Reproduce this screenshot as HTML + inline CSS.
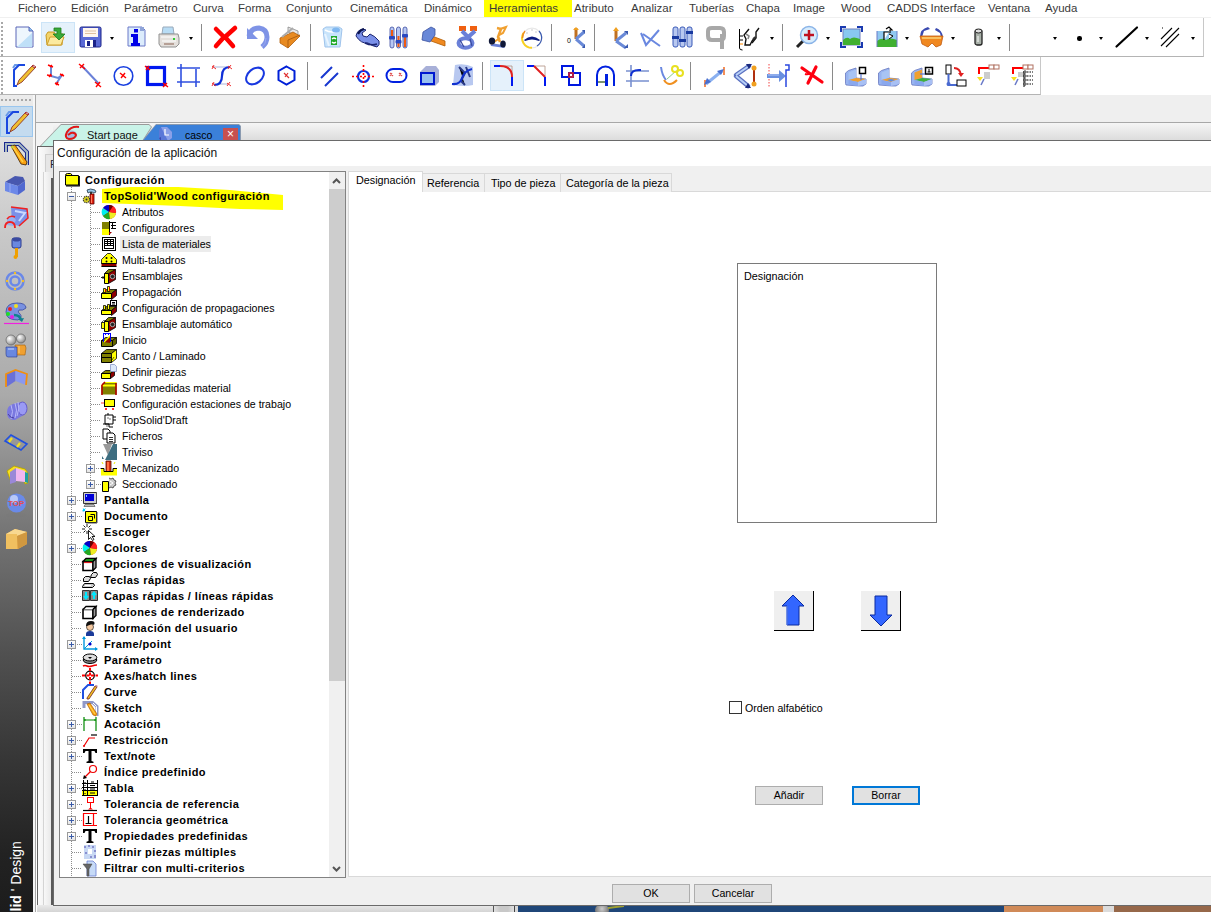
<!DOCTYPE html>
<html><head><meta charset="utf-8">
<style>
*{margin:0;padding:0;box-sizing:border-box}
html,body{width:1211px;height:912px;overflow:hidden;background:#fff;font-family:"Liberation Sans",sans-serif}
body{position:relative}
.a{position:absolute}
.mi{position:absolute;top:1px;font-size:11.5px;line-height:14px;color:#3a3a3a;white-space:nowrap}
.sep{position:absolute;width:1px;background:#a0a0a0}
.dd{position:absolute;width:0;height:0;border-left:3px solid transparent;border-right:3px solid transparent;border-top:3px solid #000}
svg{position:absolute;overflow:visible}
.tr{position:absolute;font-size:11px;line-height:16px;white-space:nowrap;color:#000}
.b{font-weight:bold;letter-spacing:0.4px}
.n{font-size:10.6px}
.tab{position:absolute;font-size:10.8px;line-height:14px;color:#000;white-space:nowrap}
.btn{position:absolute;background:#e1e1e1;border:1px solid #adadad;font-size:10.6px;text-align:center;color:#000}
.dv{width:1px;background:repeating-linear-gradient(#8c8c8c 0 1px,transparent 1px 2px)}
.dh{height:1px;background:repeating-linear-gradient(90deg,#8c8c8c 0 1px,transparent 1px 2px)}
.ex{width:9px;height:9px;border:1px solid #9a9a9a;background:linear-gradient(#fff,#e4e4e4)}
.ex i{position:absolute;left:1px;top:3px;width:5px;height:1px;background:#3a5ba8}
.ex b{position:absolute;left:3px;top:1px;width:1px;height:5px;background:#3a5ba8}
</style></head><body>

<!-- MENU BAR -->
<div class="a" style="left:0;top:0;width:1211px;height:17px;background:#fff"></div>
<div class="a" style="left:484px;top:0;width:88px;height:17px;background:#ffff00"></div>
<div class="a" style="left:489px;top:17px;width:72px;height:1px;background:#ffff00"></div>
<div class="a" style="left:0;top:17px;width:1211px;height:1px;background:#f0f0f0"></div>
<span class="mi" style="left:18px">Fichero</span>
<span class="mi" style="left:71px">Edición</span>
<span class="mi" style="left:124px">Parámetro</span>
<span class="mi" style="left:193px">Curva</span>
<span class="mi" style="left:238px">Forma</span>
<span class="mi" style="left:286px">Conjunto</span>
<span class="mi" style="left:350px">Cinemática</span>
<span class="mi" style="left:424px">Dinámico</span>
<span class="mi" style="left:489px">Herramientas</span>
<span class="mi" style="left:574px">Atributo</span>
<span class="mi" style="left:631px">Analizar</span>
<span class="mi" style="left:689px">Tuberías</span>
<span class="mi" style="left:746px">Chapa</span>
<span class="mi" style="left:793px">Image</span>
<span class="mi" style="left:841px">Wood</span>
<span class="mi" style="left:887px">CADDS Interface</span>
<span class="mi" style="left:988px">Ventana</span>
<span class="mi" style="left:1045px">Ayuda</span>

<!-- TOOLBAR ROWS -->
<div class="a" style="left:0;top:18px;width:1204px;height:39px;background:#fff;border-right:1px solid #c8c8c8;border-bottom:1px solid #b4b4b4"></div>
<div class="a" style="left:0;top:57px;width:1041px;height:38px;background:#fff;border-right:1px solid #c8c8c8;border-bottom:1px solid #b4b4b4"></div>
<div class="a" style="left:1px;top:22px;width:2px;height:34px;background:repeating-linear-gradient(#a8a8a8 0 2px,transparent 2px 4px)"></div>
<div class="a" style="left:1px;top:60px;width:2px;height:34px;background:repeating-linear-gradient(#a8a8a8 0 2px,transparent 2px 4px)"></div>

<div class="a" style="left:41px;top:22px;width:34px;height:31px;background:#e5f1fb;border:1px solid #cce4f7"></div>
<svg style="left:15px;top:26px" width="19" height="22" viewBox="0 0 19 22"><path d="M1 1h13l4 4v16H1z" fill="#eef6fd" stroke="#5a66b8"/><path d="M2 21L17 7v14z" fill="#bfe0f8"/><path d="M14 1v4h4" fill="#8cc4f0" stroke="#5a66b8"/></svg>
<svg style="left:45px;top:26px" width="22" height="21" viewBox="0 0 22 21"><path d="M1 9l2-3h6l1 2h8l-1 11H2z" fill="#f3d36a" stroke="#c89a20"/><path d="M2 19l3-8h14l-3 8z" fill="#fbeaa0" stroke="#d0a030"/><path d="M9 2h7v6h4l-6 6-6-6h4V5H9z" fill="#3aaa3a" stroke="#1e7e1e" stroke-width=".8"/></svg>
<svg style="left:79px;top:26px" width="23" height="22" viewBox="0 0 23 22"><rect x="1" y="1" width="21" height="20" rx="1.5" fill="#5a6ad6" stroke="#1a2288"/><rect x="4" y="2" width="15" height="9" fill="#fff6ee"/><path d="M6 5h11M6 7.5h11" stroke="#e0c0a0"/><rect x="6" y="14" width="11" height="7" fill="#fff"/><rect x="8" y="15" width="3" height="5" fill="#1a2288"/><rect x="14" y="14" width="3" height="7" fill="#1a2288"/></svg>
<div class="dd" style="left:110px;top:37px;border-width:3px 2.5px 0"></div>
<svg style="left:127px;top:26px" width="19" height="21" viewBox="0 0 19 21"><path d="M1 1h14l3 3v16H1z" fill="#dcecfc" stroke="#6a78c8"/><path d="M13 1h4v4h-4z" fill="#8fa4d8"/><rect x="7" y="3" width="4" height="3.5" fill="#0000e8"/><path d="M4 8h7v9h2v3H4v-3h2v-6H4z" fill="#0000e8"/></svg>
<svg style="left:158px;top:26px" width="22" height="22" viewBox="0 0 22 22"><path d="M5 1h10l1 7H4z" fill="#b8dcf4" stroke="#9ab"/><path d="M1 8h19l1 4v6l-3 3H3l-2-3z" fill="#e4e0dc" stroke="#909090"/><path d="M3 11h15M4 15h14" stroke="#fff"/><rect x="15" y="12" width="2" height="2" fill="#3c3"/><path d="M6 18h10" stroke="#886050"/></svg>
<div class="dd" style="left:189px;top:37px;border-width:3px 2.5px 0"></div>
<div class="sep" style="left:201px;top:24px;height:27px;background:#8a8a8a"></div>
<svg style="left:213px;top:26px" width="24" height="22" viewBox="0 0 24 22"><path d="M3 3l8 8-8 9M22 2l-10 9 8 9" stroke="#ff0000" stroke-width="4.5" fill="none" stroke-linecap="round"/></svg>
<svg style="left:246px;top:26px" width="24" height="23" viewBox="0 0 24 23"><path d="M3 10q2-8 10-8 8 1 8 9 0 6-5 10" stroke="#7e93e6" stroke-width="5" fill="none"/><path d="M1 2v11h11z" fill="#7e93e6"/><path d="M16 21q4-3 4-9" stroke="#9aa8f0" stroke-width="1" fill="none"/></svg>
<svg style="left:279px;top:26px" width="22" height="23" viewBox="0 0 22 23"><path d="M9 1l10 4v5l-10-4z" fill="#e8e8e8" stroke="#888" stroke-width=".8"/><path d="M1 12l13-6 7 4-12 12-8-5z" fill="#e88a20" stroke="#b06010" stroke-width=".8"/><path d="M9 22V14l12-5" stroke="#b06010" fill="none"/><path d="M3 11l11-9" stroke="#aaa" stroke-width="2"/></svg>
<div class="sep" style="left:310px;top:24px;height:27px;background:#8a8a8a"></div>
<svg style="left:322px;top:26px" width="21" height="22" viewBox="0 0 21 22"><path d="M1 3l3-2h13l3 2-2 18H3z" fill="#c8e4fb" stroke="#a0c4ec"/><path d="M3 4q7 4 15 0" stroke="#fff" stroke-width="1.5" fill="none"/><ellipse cx="14" cy="4" rx="4" ry="2.5" fill="#80b8f0"/><path d="M3 8l4 12" stroke="#e8f4ff" stroke-width="2"/><path d="M9 10h6v9H9z" fill="#20a828"/><path d="M10 13q2-2 4 0M10 16q2 2 4 0" stroke="#fff" stroke-width="1.2" fill="none"/></svg>
<svg style="left:355px;top:26px" width="24" height="22" viewBox="0 0 24 22"><path d="M1 10q1-6 7-7l3 1-4 3 1 3 4 1 3-3q5 2 9 7 1 4-2 6-5-1-9-4-7 1-12-7z" fill="#7a90e8" stroke="#1a2470" stroke-width="1"/><path d="M3 8q2-4 6-5" stroke="#0a1450" stroke-width="2.2" fill="none"/><path d="M10 17q6 3 12 1" stroke="#1a2470" stroke-width="1.5" fill="none"/></svg>
<svg style="left:389px;top:26px" width="20" height="23" viewBox="0 0 20 23"><rect x="1" y="1" width="4" height="21" rx="2" fill="#b8c8f4" stroke="#3a4aa0" stroke-width=".8"/><rect x="7.5" y="1" width="4" height="21" rx="2" fill="#b8c8f4" stroke="#3a4aa0" stroke-width=".8"/><rect x="14" y="1" width="4" height="21" rx="2" fill="#b8c8f4" stroke="#3a4aa0" stroke-width=".8"/><path d="M3 4v7M9.5 10v11M16 8v13" stroke="#f05a10" stroke-width="2"/><rect x="0" y="10" width="6" height="3.5" rx="1" fill="#2a48c0"/><rect x="6.5" y="14" width="6" height="3.5" rx="1" fill="#2a48c0"/><rect x="13" y="8" width="6" height="3.5" rx="1" fill="#2a48c0"/></svg>
<svg style="left:421px;top:26px" width="25" height="22" viewBox="0 0 25 22"><path d="M11 10l13 5v5l-14-5z" fill="#f08a20" stroke="#b05a00" stroke-width=".8"/><path d="M2 6l8-5 4 2v6l-5 7-8-2z" fill="#6888d8" stroke="#3a50a0" stroke-width=".8"/></svg>
<svg style="left:455px;top:26px" width="22" height="24" viewBox="0 0 22 24"><path d="M4 0h7v5H4zM15 0h7v5h-7z" fill="#f06010"/><path d="M7 5l8 8M20 5l-9 8" stroke="#6a80d8" stroke-width="4"/><ellipse cx="10.5" cy="17" rx="7" ry="4.8" fill="none" stroke="#6a80d8" stroke-width="4"/><path d="M5 14l4 7M15 13l2 7" stroke="#3a4aa0" stroke-width="1.2"/><path d="M9 16l2-1 2 2-2 2z" fill="#fff"/></svg>
<svg style="left:488px;top:26px" width="20" height="22" viewBox="0 0 20 22"><path d="M9 2l4 1-3 8 2 5" stroke="#f0a030" stroke-width="2.5" fill="none"/><path d="M12 3l6-2-3 6-4 2" stroke="#f0a030" stroke-width="2" fill="none"/><path d="M2 17l13 2 2 3-14-2z" fill="#6a80d8"/><path d="M3 18l9-6" stroke="#f0a030" stroke-width="2"/><ellipse cx="4" cy="15" rx="3.2" ry="3.5" fill="#101838"/><ellipse cx="15" cy="18" rx="2.8" ry="3.5" fill="#101838"/></svg>
<svg style="left:521px;top:26px" width="22" height="23" viewBox="0 0 22 23"><circle cx="11" cy="12" r="9.8" fill="#fff" stroke="#e8e8e8" stroke-width="1.2"/><path d="M2.5 7A9.8 9.8 0 0 0 11 21.8" stroke="#f8d020" stroke-width="2" fill="none"/><path d="M4 5A9.8 9.8 0 0 0 1.5 12" stroke="#f09020" stroke-width="1.5" fill="none"/><path d="M18 5A9.8 9.8 0 0 1 16 20" stroke="#3a5ab0" stroke-width="1.2" fill="none"/><path d="M3 14q8-7 16 0l-1 1q-7-3-14 0z" fill="#0a1a80"/><path d="M5 7h2M10 4h2M14 6h2" stroke="#ccc"/></svg>
<div class="sep" style="left:551px;top:24px;height:27px;background:#8a8a8a"></div>
<svg style="left:566px;top:26px" width="20" height="22" viewBox="0 0 20 22"><path d="M10 2v11" stroke="#c07020" stroke-width="3"/><path d="M7 4l3-3 3 3z" fill="#f0a020"/><path d="M10 13l8-7M10 13l8 7" stroke="#6a8ad8" stroke-width="3"/><path d="M16 4h3v4zM16 22h3v-4z" fill="#3a5ab0"/><text x="1" y="17" font-size="7" font-family="Liberation Sans" fill="#000">0</text></svg>
<div class="sep" style="left:594px;top:24px;height:27px;background:#8a8a8a"></div>
<svg style="left:611px;top:26px" width="18" height="23" viewBox="0 0 18 23"><path d="M5 4v11" stroke="#c07020" stroke-width="3"/><path d="M2 5l3-4 3 4z" fill="#f0a020"/><path d="M5 15l10-8M5 15l10 7" stroke="#6a8ad8" stroke-width="3"/><path d="M13 5h4v4zM13 22h4v-4z" fill="#3a5ab0"/></svg>
<svg style="left:640px;top:26px" width="21" height="21" viewBox="0 0 21 21"><path d="M1 7l5 12 13-15M3 8l17 12" stroke="#6a88e0" stroke-width="2" fill="none"/></svg>
<svg style="left:672px;top:26px" width="22" height="22" viewBox="0 0 22 22"><rect x="1" y="1" width="5" height="20" rx="2" fill="#b8c8f0" stroke="#3a5ab8"/><rect x="8" y="1" width="5" height="20" rx="2" fill="#b8c8f0" stroke="#3a5ab8"/><rect x="15" y="1" width="5" height="20" rx="2" fill="#b8c8f0" stroke="#3a5ab8"/><rect x="0" y="10" width="7" height="3" fill="#1a3aa0"/><rect x="7" y="13" width="7" height="3" fill="#1a3aa0"/><rect x="14" y="5" width="7" height="3" fill="#1a3aa0"/></svg>
<svg style="left:705px;top:26px" width="22" height="24" viewBox="0 0 22 24"><path d="M3 5q0-3 4-3h8q4 0 4 4v4q0 4-4 4H7q-4 0-4-4z" fill="none" stroke="#a8a8a8" stroke-width="4"/><path d="M15 8h4v15h-4z" fill="#a8a8a8"/></svg>
<svg style="left:738px;top:26px" width="23" height="22" viewBox="0 0 23 22"><path d="M1.5 3v19q0 2 3 2" stroke="#000" stroke-width="1" fill="none"/><path d="M2 10h3M2 14h3" stroke="#000"/><path d="M2 18h3" stroke="#f80"/><path d="M11 3L6 9l2 4-1 6h5l2-4 3-4" stroke="#111" stroke-width="1.4" fill="none"/><path d="M8 8l3 2-1 3" stroke="#888" stroke-width="1.6" fill="none"/><path d="M21 2l-3 4v6l-4 5" stroke="#111" stroke-width="1.4" fill="none"/><path d="M15 13l3-2" stroke="#333" stroke-width="2"/></svg>
<div class="dd" style="left:770px;top:37px;border-width:3px 2.5px 0"></div>
<div class="sep" style="left:782px;top:24px;height:27px;background:#8a8a8a"></div>
<svg style="left:795px;top:25px" width="24" height="24" viewBox="0 0 24 24"><path d="M2 22l7-7" stroke="#222" stroke-width="3"/><circle cx="14" cy="10" r="8.5" fill="#d8ecfc" stroke="#8ab4e8" stroke-width="1.5"/><path d="M14 5v10M9 10h10" stroke="#c01020" stroke-width="2.5"/></svg>
<div class="dd" style="left:826px;top:37px;border-width:3px 2.5px 0"></div>
<svg style="left:840px;top:26px" width="23" height="22" viewBox="0 0 23 22"><rect x="3" y="3" width="17" height="16" fill="#88c8f0" stroke="#7080c0"/><path d="M3 14q4-4 7-1 3-3 10 0v6H3z" fill="#40b030"/><path d="M1 6V1h5M17 1h5v5M1 16v5h5M17 21h5v-5" stroke="#1a3ab0" stroke-width="2" fill="none"/></svg>
<svg style="left:876px;top:26px" width="22" height="22" viewBox="0 0 22 22"><rect x="1" y="5" width="20" height="16" fill="#90c8f0"/><path d="M1 15q5-4 9-1 4-3 11 0v7H1z" fill="#40b030"/><path d="M1 5v16M21 5v16" stroke="#6a7ac8"/><path d="M8 14V6h5M10 3l3-2 3 3h-2v3" stroke="#000" stroke-width="1.2" fill="#fff"/><path d="M13 8l4 2-4 3" stroke="#000" fill="#fff"/></svg>
<div class="dd" style="left:905px;top:37px;border-width:3px 2.5px 0"></div>
<svg style="left:919px;top:26px" width="25" height="22" viewBox="0 0 25 22"><path d="M1 11q0-8 8-10l2 2-6 2-2 6zM24 11q-1-7-7-9l-1 2 5 3 1 4z" fill="#3a4ab0"/><path d="M1 10h23l-2 9-5 2-4-4-4 4-6-3z" fill="#f08820" stroke="#c05a10" stroke-width=".8"/><path d="M3 12h19" stroke="#f8c060" stroke-width="2"/></svg>
<div class="dd" style="left:951px;top:37px;border-width:3px 2.5px 0"></div>
<svg style="left:974px;top:28px" width="9" height="18" viewBox="0 0 9 18"><rect x="1" y="2" width="7" height="15" rx="2" fill="#a8b0a8" stroke="#222" stroke-width="1.3"/><ellipse cx="4.5" cy="3" rx="3.5" ry="2" fill="#ddd" stroke="#222"/><path d="M4 8v6" stroke="#fff"/></svg>
<div class="dd" style="left:997px;top:37px;border-width:3px 2.5px 0"></div>
<div class="sep" style="left:1009px;top:24px;height:27px;background:#8a8a8a"></div>
<div class="dd" style="left:1053px;top:37px;border-width:3px 2.5px 0"></div>
<div class="a" style="left:1077px;top:36px;width:4.5px;height:4.5px;border-radius:50%;background:#000"></div>
<div class="dd" style="left:1099px;top:37px;border-width:3px 2.5px 0"></div>
<svg style="left:1115px;top:26px" width="24" height="22" viewBox="0 0 24 22"><path d="M1.5 20.5L22 1.5" stroke="#000" stroke-width="2.2" stroke-linecap="round"/></svg>
<div class="dd" style="left:1145px;top:37px;border-width:3px 2.5px 0"></div>
<svg style="left:1160px;top:26px" width="22" height="22" viewBox="0 0 22 22"><path d="M1 13L12 2M1 20L19 2M6 21L19 8" stroke="#000" stroke-width="1.1"/><path d="M2 2h1" stroke="#000"/></svg>
<div class="dd" style="left:1191px;top:37px;border-width:3px 2.5px 0"></div>
<div class="a" style="left:490px;top:60px;width:34px;height:31px;background:#e5f1fb;border:1px solid #cce4f7"></div>
<svg style="left:12px;top:64px" width="25" height="23" viewBox="0 0 25 23"><path d="M7 1H3L1 4" stroke="#6a9ae8" stroke-width="2" fill="none"/><path d="M13 1H7L2 6v16h3" stroke="#1a48e0" stroke-width="2" fill="none"/><path d="M5 21l2-5L20 2l3 2-13 14z" fill="#f0c030" stroke="#802020" stroke-width=".8"/><path d="M20 2l1-1 3 2-1 1z" fill="#fff" stroke="#a33"/></svg>
<svg style="left:47px;top:64px" width="18" height="23" viewBox="0 0 18 23"><path d="M4 2v10l7 2 4-3-6 9" stroke="#6a8ad8" stroke-width="2" fill="none"/><path d="M1 1l5 2M3 3l2-2M0 11l5 1M2 13l2-3M13 10l4 2M14 12l2-2M8 19l4 2M9 21l2-3" stroke="#f00" stroke-width="1.4"/></svg>
<svg style="left:78px;top:63px" width="24" height="25" viewBox="0 0 24 25"><path d="M4 3l17 18" stroke="#6a80d8" stroke-width="2"/><path d="M1 1l6 5M6 1L2 5M17 19l6 5M22 19l-4 5" stroke="#f00" stroke-width="1.4"/></svg>
<svg style="left:113px;top:65px" width="21" height="22" viewBox="0 0 21 22"><circle cx="10.5" cy="11" r="9.3" fill="none" stroke="#1a40e0" stroke-width="1.6"/><path d="M7 8l6 5M12 8l-4 5" stroke="#f00" stroke-width="1.4"/></svg>
<svg style="left:145px;top:65px" width="23" height="22" viewBox="0 0 23 22"><rect x="2.5" y="2.5" width="17" height="17" fill="none" stroke="#0018f0" stroke-width="3.2"/><path d="M0 1l5 4M4 1L1 5M18 18l5 4M22 18l-4 4" stroke="#f00" stroke-width="1.4"/></svg>
<svg style="left:177px;top:64px" width="23" height="23" viewBox="0 0 23 23"><path d="M4 0v23M19 5v18M0 4h23M0 18h23" stroke="#3050e0" stroke-width="1.6"/></svg>
<svg style="left:211px;top:65px" width="22" height="22" viewBox="0 0 22 22"><path d="M2 2h16M3 19h14" stroke="#7080c0" stroke-width=".6"/><path d="M3 20q8 0 8-9t8-9" stroke="#1030d8" stroke-width="2.2" fill="none"/><path d="M1 1l4 3M3 0L1 4M17 1l4 3M20 0l-3 4M1 18l4 3M3 17l-2 4M16 18l4 3M19 17l-3 4" stroke="#f03030" stroke-width="1"/></svg>
<svg style="left:244px;top:65px" width="22" height="22" viewBox="0 0 22 22"><ellipse cx="11" cy="11" rx="10" ry="7" transform="rotate(-40 11 11)" fill="none" stroke="#1838e0" stroke-width="2"/></svg>
<svg style="left:277px;top:65px" width="19" height="21" viewBox="0 0 19 21"><path d="M9.5 1.5l8 4.5v9l-8 4.5-8-4.5v-9z" fill="none" stroke="#0020d8" stroke-width="2"/><path d="M7 8l5 5M11 8l-3 4" stroke="#e03030" stroke-width="1.2"/></svg>
<div class="sep" style="left:307px;top:62px;height:28px;background:#8a8a8a"></div>
<svg style="left:320px;top:66px" width="19" height="21" viewBox="0 0 19 21"><path d="M1 12L12 1M5 20L18 7" stroke="#1838d0" stroke-width="2"/></svg>
<svg style="left:352px;top:65px" width="23" height="23" viewBox="0 0 23 23"><circle cx="11.5" cy="11.5" r="5.5" fill="none" stroke="#1030e0" stroke-width="2.2"/><path d="M11.5 0v23M0 11.5h23" stroke="#f00" stroke-width="1.6" stroke-dasharray="2 2"/></svg>
<svg style="left:385px;top:67px" width="23" height="17" viewBox="0 0 23 17"><rect x="1.5" y="2" width="20" height="13" rx="6.5" fill="#fff" stroke="#0020e0" stroke-width="2"/><path d="M5 6l3 3M7 6l-2 3M14 6l3 3M16 6l-2 3" stroke="#e05050" stroke-width="1.2"/></svg>
<svg style="left:419px;top:64px" width="21" height="23" viewBox="0 0 21 23"><path d="M1 8l6-6h10l3 4v12l-4 4H1z" fill="#a8b0d8"/><path d="M2 9h13v11H2z" fill="#98c0f0" stroke="#0018d0" stroke-width="2"/></svg>
<svg style="left:451px;top:64px" width="23" height="23" viewBox="0 0 23 23"><path d="M4 1q10-2 18 2v18q-8 2-20 0z" fill="#b8c8f0"/><path d="M8 3l6 6-4 8 4 4M15 3l4 10" stroke="#283888" stroke-width="2"/><path d="M1 20q8 1 10-6t10-9" stroke="#1030d0" stroke-width="2" fill="none"/></svg>
<div class="sep" style="left:482px;top:62px;height:28px;background:#8a8a8a"></div>
<svg style="left:494px;top:65px" width="21" height="21" viewBox="0 0 21 21"><path d="M18 1v11" stroke="#b09080" stroke-width=".8"/><path d="M7 1h11" stroke="#b09080" stroke-width=".8"/><path d="M0 1h6" stroke="#0018f0" stroke-width="2"/><path d="M6 1q12 0 12 11" stroke="#e02020" stroke-width="2" fill="none"/><path d="M18 12v9" stroke="#0018f0" stroke-width="2"/></svg>
<svg style="left:527px;top:65px" width="21" height="21" viewBox="0 0 21 21"><path d="M7 1h11v11" stroke="#b09080" stroke-width=".8" fill="none"/><path d="M0 1h7" stroke="#0018f0" stroke-width="2"/><path d="M7 1l11 11" stroke="#e02020" stroke-width="2"/><path d="M18 12v9" stroke="#0018f0" stroke-width="2"/></svg>
<svg style="left:561px;top:65px" width="20" height="21" viewBox="0 0 20 21"><rect x="1" y="1" width="11" height="11" fill="none" stroke="#0018e0" stroke-width="2"/><rect x="8" y="8" width="11" height="12" fill="none" stroke="#0018e0" stroke-width="2"/><rect x="8" y="8" width="4" height="4" fill="none" stroke="#e02020" stroke-width="1.5"/></svg>
<svg style="left:595px;top:65px" width="21" height="21" viewBox="0 0 21 21"><path d="M2 21V10a8.5 8.5 0 0 1 17 0v11" stroke="#0020e0" stroke-width="2" fill="none"/><path d="M10 9h3v12h-3z" fill="#0020e0"/><path d="M3 17h7" stroke="#507040" stroke-width="1.5"/></svg>
<svg style="left:626px;top:64px" width="23" height="23" viewBox="0 0 23 23"><path d="M5 1v22M0 7h23M0 17h23" stroke="#7890d0" stroke-width="1.6"/><path d="M5 12q0-6 8-6h2" stroke="#1030d0" stroke-width="2" fill="none"/></svg>
<svg style="left:659px;top:65px" width="25" height="22" viewBox="0 0 25 22"><path d="M2 2q1 8 5 13" stroke="#6a88e0" stroke-width="2" fill="none"/><path d="M5 15q5 8 13 0" stroke="#f09020" stroke-width="2" fill="none"/><path d="M8 14l9-8" stroke="#8c8" stroke-width="1"/><circle cx="16" cy="4" r="3" fill="none" stroke="#e8e020" stroke-width="2"/><circle cx="21" cy="8" r="3" fill="none" stroke="#e8e020" stroke-width="2"/></svg>
<div class="sep" style="left:690px;top:62px;height:28px;background:#8a8a8a"></div>
<svg style="left:702px;top:66px" width="25" height="21" viewBox="0 0 25 21"><path d="M3 14v7M22 1v8" stroke="#f06010" stroke-width="1.4"/><path d="M4 18L20 5" stroke="#8ab0f0" stroke-width="3"/><path d="M2 19l3-7 4 4zM22 3l-7 2 4 4z" fill="#4a70d0"/></svg>
<svg style="left:734px;top:64px" width="23" height="25" viewBox="0 0 23 25"><path d="M2 11L15 2M2 12l12 10" stroke="#5a70c0" stroke-width="4.5" stroke-linecap="round"/><path d="M2 11L15 2M2 12l12 10" stroke="#b8d0f8" stroke-width="2"/><path d="M12 0h6l-3 5zM11 24h6l-3-5z" fill="#1a2a80"/><path d="M20 4v16" stroke="#b03010" stroke-width="2"/><circle cx="20" cy="4" r="2.5" fill="#f0a020"/><circle cx="20" cy="20" r="2.5" fill="#f0a020"/></svg>
<svg style="left:767px;top:64px" width="23" height="23" viewBox="0 0 23 23"><path d="M2 0v23" stroke="#f04040" stroke-width="1" stroke-dasharray="1.5 1.5"/><path d="M0 10h12v-4l7 6-7 6v-4H0z" fill="#6a90e0"/><path d="M1 11h11" stroke="#b0c8f8"/><path d="M18 1h4v5h-3v17" stroke="#2a48e0" stroke-width="1.5" fill="none"/></svg>
<svg style="left:800px;top:65px" width="24" height="22" viewBox="0 0 24 22"><path d="M2 3l20 14M16 2L8 18" stroke="#ff0010" stroke-width="3.2" stroke-linecap="round"/><path d="M5 9q3 1 5-1" stroke="#ff0010" stroke-width="2" fill="none"/></svg>
<div class="sep" style="left:832px;top:62px;height:28px;background:#8a8a8a"></div>
<svg style="left:845px;top:65px" width="22" height="22" viewBox="0 0 22 22"><path d="M0.5 8l3-2.5 7.5-2.5v10l10 1v5l-3 2h-4l-13-1-0.5-1.5z" fill="#98b4f0" stroke="#6878c0" stroke-width=".8"/><path d="M3.5 7.5l7.5-3v8.5l-7.5 2z" fill="#a8c4f4"/><path d="M3.5 15l7.5-2 10 1-8 3z" fill="#f0a030"/><path d="M3.5 15l9.5 2v4l-9.5-1.5z" fill="#8aa8ee"/><path d="M13 17l8-3v5l-8 2z" fill="#a8c0f4"/><rect x="14.5" y="2.5" width="6" height="6" fill="#fff" stroke="#000" stroke-width="1.5"/><path d="M16 9v6" stroke="#5a78d0" stroke-width="1.2"/></svg>
<svg style="left:878px;top:65px" width="22" height="22" viewBox="0 0 22 22"><path d="M0.5 8l3-2.5 7.5-2.5v10l10 1v5l-3 2h-4l-13-1-0.5-1.5z" fill="#98b4f0" stroke="#6878c0" stroke-width=".8"/><path d="M3.5 7.5l7.5-3v8.5l-7.5 2z" fill="#a8c4f4"/><path d="M3.5 15l7.5-2 10 1-8 3z" fill="#f0a030"/><path d="M3.5 15l9.5 2v4l-9.5-1.5z" fill="#8aa8ee"/><path d="M13 17l8-3v5l-8 2z" fill="#a8c0f4"/><path d="M9 15l4-1 4 1-4 1.5z" fill="#5a8ae0"/></svg>
<svg style="left:911px;top:65px" width="22" height="22" viewBox="0 0 22 22"><path d="M0.5 8l3-2.5 7.5-2.5v10l10 1v5l-3 2h-4l-13-1-0.5-1.5z" fill="#98b4f0" stroke="#6878c0" stroke-width=".8"/><path d="M3.5 7.5l7.5-3v8.5l-7.5 2z" fill="#f0a030"/><path d="M3.5 15l7.5-2 10 1-8 3z" fill="#40b040"/><path d="M3.5 15l9.5 2v4l-9.5-1.5z" fill="#8aa8ee"/><path d="M13 17l8-3v5l-8 2z" fill="#a8c0f4"/><rect x="14.5" y="2.5" width="7" height="6.5" fill="#fff" stroke="#000" stroke-width="1.5"/><path d="M18 4v3M16.5 7h3" stroke="#000"/><path d="M9 9h5" stroke="#5a78d0" stroke-width="1.2"/></svg>
<svg style="left:945px;top:64px" width="22" height="24" viewBox="0 0 22 24"><rect x="1" y="1" width="5" height="9" fill="#fff" stroke="#000"/><path d="M3.5 10v11h9" stroke="#4a6ad0" stroke-width="2" fill="none"/><circle cx="3.5" cy="20" r="2" fill="#4a6ad0"/><rect x="12" y="16" width="9" height="6" fill="#fff" stroke="#000"/><path d="M9 4q6 0 7 7" stroke="#e02020" stroke-width="2" fill="none"/><path d="M13 9l3 4 3-4z" fill="#e02020"/></svg>
<svg style="left:976px;top:64px" width="23" height="24" viewBox="0 0 23 24"><path d="M3 10V4h19" stroke="#f00" stroke-width="2" fill="none"/><rect x="13" y="1" width="5" height="4" fill="#fff" stroke="#b07060"/><rect x="18" y="1" width="5" height="4" fill="#fff" stroke="#b07060"/><path d="M1 13h6l-3 4z" fill="#f8e020"/><path d="M8 8h6v7H8z" fill="#ccc"/><path d="M8 15l-3 6" stroke="#6a7ac8" stroke-width="1.5"/></svg>
<svg style="left:1010px;top:64px" width="23" height="24" viewBox="0 0 23 24"><path d="M3 10V4h19" stroke="#f00" stroke-width="2" fill="none"/><rect x="13" y="1" width="5" height="4" fill="#fff" stroke="#b07060"/><rect x="18" y="1" width="5" height="4" fill="#fff" stroke="#b07060"/><path d="M1 13h6l-3 4z" fill="#f8e020"/><path d="M8 8h6v5H8z" fill="#ccc"/><path d="M8 15l-3 6" stroke="#6a7ac8" stroke-width="1.5"/><path d="M14 7v16" stroke="#000"/><circle cx="15" cy="8" r="1.2" fill="#fff" stroke="#000" stroke-width=".8"/><circle cx="15" cy="12" r="1.2" fill="#fff" stroke="#000" stroke-width=".8"/><circle cx="15" cy="16" r="1.2" fill="#fff" stroke="#000" stroke-width=".8"/><circle cx="15" cy="20" r="1.2" fill="#fff" stroke="#000" stroke-width=".8"/><path d="M17 8h6M17 12h6M17 16h6M17 20h6" stroke="#000" stroke-dasharray="1.5 1"/></svg>
<!-- GRAY AREA + TAB STRIP -->
<div class="a" style="left:36px;top:95px;width:1175px;height:27px;background:#efefef"></div>
<div class="a" style="left:36px;top:122px;width:1175px;height:1px;background:#a8a8a8"></div>
<div class="a" style="left:36px;top:123px;width:1175px;height:17px;background:linear-gradient(#f6f6f6,#dcdcdc)"></div>

<!-- LEFT TOOLBAR -->
<div class="a" style="left:0;top:95px;width:36px;height:817px;background:linear-gradient(#ececec 0px,#dcdcdc 60px,#c8c8c8 140px,#aaaaaa 300px,#8a8a8a 380px,#727272 445px,#505050 560px,#363636 665px,#222 760px,#1c1c1c 817px)"></div>
<div class="a" style="left:33px;top:95px;width:2px;height:817px;background:#f6f6f6"></div>
<div class="a" style="left:35px;top:95px;width:1px;height:817px;background:#a8a8a8"></div>
<div class="a" style="left:1px;top:99px;width:32px;height:2px;background:repeating-linear-gradient(90deg,#a8a8a8 0 2px,transparent 2px 4px)"></div>
<div class="a" style="left:0;top:106px;width:33px;height:31px;background:#c4dbef;border:1px solid #9ac6ee"></div>
<svg style="left:5px;top:111px" width="25" height="23" viewBox="0 0 25 23"><path d="M8 1H4L1 5" stroke="#6a9ae8" stroke-width="2" fill="none"/><path d="M14 1H8L2 7v15h3" stroke="#1a48e0" stroke-width="2" fill="none"/><path d="M5 21l2-5L20 2l3 2-13 14z" fill="#f0c030" stroke="#802020" stroke-width=".8"/><path d="M20 2l1-1 3 2-1 1z" fill="#fff" stroke="#a33"/></svg>
<svg style="left:4px;top:142px" width="25" height="24" viewBox="0 0 25 24"><path d="M2 10V2h13l8 8v13" stroke="#1a2a90" stroke-width="4" fill="none"/><path d="M2 10V2h13l8 8v13" stroke="#a8b8c0" stroke-width="2" fill="none"/><path d="M7 4l4-1 12 17-1 3-5-1z" fill="#f8a010" stroke="#402000" stroke-width=".8"/><path d="M9 5l10 15" stroke="#ffd040" stroke-width="1.5"/><circle cx="8.5" cy="5" r="1.5" fill="#c8d040"/></svg>
<svg style="left:4px;top:174px" width="22" height="22" viewBox="0 0 22 22"><path d="M1 8l10-6 8 1 2 4-7 5z" fill="#4858b0"/><path d="M1 8l13 4v9L1 17z" fill="#6c88e8"/><path d="M14 12l7-5v9l-7 5z" fill="#5068d0"/><path d="M6 10v8" stroke="#8aa0f0" stroke-width="1.5"/></svg>
<svg style="left:4px;top:205px" width="25" height="24" viewBox="0 0 25 24"><path d="M7 2l16 2 1 9-9 8-7-2z" fill="#7a90e8"/><path d="M7 2l16 2 1 9-9 8" stroke="#f02020" stroke-width="1.5" fill="none"/><path d="M11 6l10 2-6 8" stroke="#c8d8ff" stroke-width="2" fill="none"/><path d="M3 14l6-3 3 4-3 6-6-1z" fill="#98b0f0"/><path d="M3 14q3-4 8-2" stroke="#f02020" stroke-width="1.5" fill="none"/><path d="M1 23q0-6 5-6t5 6" stroke="#f02020" stroke-width="1.8" fill="none"/></svg>
<svg style="left:11px;top:237px" width="11" height="23" viewBox="0 0 11 23"><rect x="1" y="1" width="9" height="10" rx="2" fill="#6a88e0" stroke="#2a3a90"/><ellipse cx="5.5" cy="2.5" rx="4" ry="2" fill="#3a4aa0"/><path d="M5.5 11v9" stroke="#f0a000" stroke-width="3"/><circle cx="4.5" cy="20" r="2" fill="#f0a000"/></svg>
<svg style="left:5px;top:271px" width="20" height="20" viewBox="0 0 20 20"><circle cx="10" cy="10" r="8.5" fill="none" stroke="#6a88e8" stroke-width="2.5"/><circle cx="10" cy="10" r="4.5" fill="none" stroke="#6a88e8" stroke-width="2.5"/><circle cx="10" cy="2" r="1.2" fill="#f8c020"/><circle cx="10" cy="18" r="1.2" fill="#f8c020"/><circle cx="2" cy="10" r="1.2" fill="#f8c020"/><circle cx="18" cy="10" r="1.2" fill="#f8c020"/></svg>
<svg style="left:4px;top:302px" width="25" height="22" viewBox="0 0 25 22"><path d="M2 10q0-9 11-9 9 0 9 5-3 3-7 2-2 2 1 4 3 3-2 6-12 0-12-8z" fill="#7890e0" stroke="#3a4aa0" stroke-width=".8"/><circle cx="6" cy="7" r="2" fill="#f02020"/><circle cx="12" cy="4" r="2" fill="#f0e020"/><circle cx="4" cy="12" r="2" fill="#20e020"/><circle cx="8" cy="15" r="2" fill="#e020e0"/><path d="M10 13q6 0 7 5" stroke="#108090" stroke-width="2.5" fill="none"/><path d="M14 17l4 3 2-4z" fill="#108090"/><path d="M0 21.5h25" stroke="#f020e0" stroke-width="1.2"/></svg>
<svg style="left:5px;top:333px" width="23" height="25" viewBox="0 0 23 25"><defs><radialGradient id="hg" cx=".35" cy=".35" r=".7"><stop offset="0" stop-color="#fff"/><stop offset="1" stop-color="#8a8a8a"/></radialGradient></defs><circle cx="16" cy="5.5" r="4.5" fill="url(#hg)" stroke="#555" stroke-width=".6"/><path d="M10 12h10l1 3-1 7h-9z" fill="#f0a030" stroke="#a06010" stroke-width=".6"/><path d="M14 13v7" stroke="#ffd070"/><circle cx="6" cy="7" r="5" fill="url(#hg)" stroke="#555" stroke-width=".6"/><path d="M1 14h11v10H3q-2 0-2-3z" fill="#6a88e0" stroke="#2a3a90" stroke-width=".6"/><path d="M3 16h6" stroke="#b8ccf8" stroke-width="1.2"/></svg>
<svg style="left:5px;top:369px" width="23" height="19" viewBox="0 0 23 19"><path d="M1 5l9.5-4v11L1.5 18z" fill="#6a70d8"/><path d="M10.5 1L22 5l-1 11-10.5-4z" fill="#8a98f0"/><path d="M1 18V5l9.5-4L22 5l-1 11" stroke="#f09010" stroke-width="1.8" fill="none"/></svg>
<svg style="left:5px;top:400px" width="23" height="21" viewBox="0 0 23 21"><path d="M2 12q0-6 6-8l9-2q5 0 5 6 0 6-5 8l-7 4q-8 1-8-8z" fill="#7a78e0"/><ellipse cx="17.5" cy="8.5" rx="4.5" ry="6.5" fill="#9a9af4" stroke="#5a50c0" stroke-width=".8"/><path d="M6 5q3 6 0 14M10 3q3 7 0 15M13 2q2 7 -1 14" stroke="#b8b8f8" stroke-width="1" fill="none"/><path d="M3 14q2 4 6 4" stroke="#4a40a0" fill="none"/></svg>
<svg style="left:4px;top:434px" width="24" height="17" viewBox="0 0 24 17"><path d="M1 7l6-6 16 9-6 6z" fill="none" stroke="#2050e0" stroke-width="1.6"/><path d="M8 4l-3 4M16 9l-3 4" stroke="#f0e020" stroke-width="2.2"/></svg>
<svg style="left:5px;top:464px" width="24" height="20" viewBox="0 0 24 20"><path d="M2 7l7-5 11 3 3 4v10l-3 1-2-8-9-3-3 3v6z" fill="#f8e020" stroke="#b0a000" stroke-width=".8"/><path d="M5 8l6-4v14l-6 2z" fill="#9a88d8"/><path d="M11 4l9 3v11l-9-1z" fill="#f0b8f0"/><path d="M20 8l3 1v10l-3-1z" fill="#20a0a0"/></svg>
<svg style="left:5px;top:493px" width="23" height="25" viewBox="0 0 23 25"><circle cx="11.5" cy="10" r="9.5" fill="#6a8ae8"/><circle cx="9" cy="6" r="4" fill="#b8c8f8"/><text x="3" y="13" font-size="8" font-weight="bold" font-family="Liberation Sans" fill="#e05050">TOP</text><ellipse cx="11" cy="22" rx="10" ry="2" fill="#7a7a7a" opacity=".5"/></svg>
<svg style="left:5px;top:527px" width="23" height="23" viewBox="0 0 23 23"><path d="M1 7l9-5 12 3v12l-9 5H1z" fill="#e8b050"/><path d="M1 7l9-5 12 3-10 4z" fill="#f8d890"/><path d="M12 9l10-4v12l-9 5z" fill="#d09840"/><path d="M1 7h11v15H1z" fill="#f0c060"/></svg>
<div class="a" style="left:8px;top:954px;color:#fff;font-size:14px;transform-origin:0 0;transform:rotate(-90deg);white-space:nowrap;line-height:16px"><b>TopSolid</b> ' Design</div>

<!-- MDI WINDOW BEHIND -->
<div class="a" style="left:37px;top:146px;width:1174px;height:766px;background:#f0f0f0;border-left:1px solid #646464;border-top:1px solid #646464"></div>
<div class="a" style="left:38px;top:147px;width:15px;height:765px;background:linear-gradient(90deg,#fbfbfb,#f4f4f4 6px,#e2e2e2)"></div>
<div class="a" style="left:45px;top:154px;width:8px;height:18px;background:#e6e6e6;border-left:1px solid #cfcfcf;border-top:1px solid #cfcfcf"></div>
<span class="a" style="left:50px;top:157px;font-size:11px;line-height:14px;color:#123">F</span>
<div class="a" style="left:43px;top:172px;width:10px;height:740px;background:linear-gradient(90deg,#f8f8f8,#e4e4e4);border-left:1px solid #d4d4d4"></div>
<div class="a" style="left:51px;top:178px;width:2px;height:734px;background:#5a5a5a"></div>
<div class="a" style="left:37px;top:905px;width:457px;height:7px;background:linear-gradient(#eaeaea,#d4d4d4)"></div>
<div class="a" style="left:493px;top:905px;width:1px;height:7px;background:#555"></div>
<div class="a" style="left:494px;top:905px;width:20px;height:7px;background:linear-gradient(90deg,#e0e0e0,#c8c8c8 30%,#c8c8c8 70%,#e0e0e0)"></div>
<div class="a" style="left:514px;top:905px;width:1px;height:7px;background:#444"></div>
<div class="a" style="left:515px;top:905px;width:3px;height:7px;background:#d8d8d8"></div>
<div class="a" style="left:518px;top:905px;width:486px;height:7px;background:#1f4678"></div>
<div class="a" style="left:595px;top:904px;width:14px;height:12px;border-radius:50%;background:radial-gradient(circle at 50% 40%,#ccc,#555)"></div>
<div class="a" style="left:608px;top:906px;width:16px;height:2px;background:#a0a030;transform:skewY(-8deg)"></div>
<div class="a" style="left:1004px;top:905px;width:99px;height:7px;background:#d08a58"></div>
<div class="a" style="left:1103px;top:905px;width:11px;height:7px;background:#dcdcdc"></div>
<div class="a" style="left:1114px;top:905px;width:97px;height:7px;background:#96684a"></div>

<!-- TABS -->
<div class="a" style="left:36px;top:123px;width:17px;height:23px;background:#f3f3f3"></div>
<div class="a" style="left:40px;top:124px;width:112px;height:22px;background:#9a9a9a;clip-path:polygon(0 100%,21px 0,109px 0,112px 3px,100px 100%)"></div>
<div class="a" style="left:41px;top:125px;width:110px;height:21px;background:#c9f3e8;clip-path:polygon(0 100%,20px 0,108px 0,110px 2px,98px 100%)"></div>
<div class="a" style="left:141px;top:124px;width:100px;height:18px;background:#8a9ab0;clip-path:polygon(0 100%,15px 0,98px 0,100px 2px,100px 100%)"></div>
<div class="a" style="left:142px;top:125px;width:98px;height:17px;background:#3b80d9;clip-path:polygon(0 100%,14px 0,97px 0,98px 1px,98px 100%)"></div>
<svg style="left:63px;top:126px" width="17" height="14" viewBox="0 0 17 14"><ellipse cx="8" cy="9" rx="6" ry="4.5" fill="#8a9ae0" opacity=".6"/><path d="M16 1Q8 0 4 6q-3 6 2 7 6 0 7-4-1-3-5-2l-3 2" stroke="#e01818" stroke-width="2" fill="none"/></svg>
<svg style="left:158px;top:126px" width="15" height="15" viewBox="0 0 15 15"><path d="M3 1h6l5 5v6l-4 3H3L1 12V4z" fill="#5a78d8"/><path d="M3 1h6l5 5v6l-4 3z" fill="#8aa0e8"/><path d="M7 3v6h4" stroke="#fff" stroke-width="1.2" fill="none"/><path d="M1 12l2-1v4" fill="#3a4ab0"/></svg>
<div class="a" style="left:223px;top:128px;width:15px;height:13px;background:#c75050;color:#fff;font-size:12px;line-height:12px;text-align:center">&#215;</div>
<span class="a" style="left:87px;top:128px;font-size:11px;line-height:14px;color:#111">Start page</span>
<span class="a" style="left:185px;top:128px;font-size:10.5px;line-height:14px;color:#000">casco</span>

<!-- DIALOG -->
<div class="a" style="left:53px;top:140px;width:1158px;height:766px;background:#f0f0f0;border:1px solid #6a6a6a;border-right:none"></div>
<div class="a" style="left:54px;top:141px;width:1157px;height:25px;background:#fff"></div>
<span class="a" style="left:57px;top:146px;font-size:12px;line-height:15px;color:#111">Configuración de la aplicación</span>

<!-- TREE BOX -->
<div class="a" style="left:59px;top:171px;width:287px;height:707px;background:#fff;border:1px solid #828282"></div>
<div class="a" style="left:329px;top:172px;width:16px;height:705px;background:#f0f0f0"></div>
<div class="a" style="left:329px;top:189px;width:16px;height:492px;background:#cdcdcd"></div>
<svg style="left:331px;top:176px" width="12" height="10" viewBox="0 0 12 10"><path d="M2 7l3.5-3.5 3.5 3.5" stroke="#555" stroke-width="2" fill="none"/></svg>
<svg style="left:331px;top:864px" width="12" height="10" viewBox="0 0 12 10"><path d="M2 3l3.5 3.5 3.5-3.5" stroke="#555" stroke-width="2" fill="none"/></svg>
<div class="a dv" style="left:71px;top:187px;height:690px"></div>
<div class="a dv" style="left:90px;top:205px;height:280px"></div>
<div class="a" style="left:120px;top:236px;width:91px;height:16px;background:#ececec"></div>
<div class="a" style="left:102px;top:186px;width:182px;height:25px;background:#ffff00;clip-path:polygon(0 3px,28px 1px,76px 1px,128px 4px,181px 9px,181px 24px,138px 23px,78px 20px,28px 18px,0 17px)"></div>
<svg class="ti" style="left:65px;top:172px" width="16" height="16" viewBox="0 0 16 16"><path d="M0.5 3.5q0-2 2-2h3q1 0 1.5 2h6.5v9.5h-13z" fill="#ffff00" stroke="#000"/><path d="M1 13.8h13.3V4" stroke="#000" stroke-width="1.2" fill="none"/><path d="M1 3.5h6" stroke="#000"/></svg>
<div class="tr b" style="left:85px;top:172px">Configuración</div>
<div class="a ex" style="left:67px;top:192px"><i></i></div>
<div class="a dh" style="left:77px;top:196px;width:5px"></div>
<svg class="ti" style="left:82px;top:188px" width="16" height="16" viewBox="0 0 16 16"><path d="M8 6h4v10H8z" fill="#e02010" stroke="#500" stroke-width=".8"/><path d="M9 7h1v8H9z" fill="#ff8060"/><path d="M5 2q3-2 8 0l1 2-2 1-2-1H8L6 5z" fill="#98c8e8" stroke="#234" stroke-width=".8"/><path d="M9 4v2" stroke="#333" stroke-width="2"/><circle cx="4.5" cy="11.5" r="3.2" fill="#d8d020" stroke="#333" stroke-width="1.2" stroke-dasharray="1.2 .8"/><circle cx="4.5" cy="11.5" r="1" fill="#333"/></svg>
<div class="tr b" style="left:104px;top:188px">TopSolid'Wood configuración</div>
<div class="a dh" style="left:91px;top:212px;width:10px"></div>
<svg class="ti" style="left:101px;top:204px" width="16" height="16" viewBox="0 0 16 16"><circle cx="8" cy="8" r="7" fill="#c00"/><path d="M8 8L8 1A7 7 0 0 0 2 4z" fill="#00c"/><path d="M8 8L2 4A7 7 0 0 0 2 12z" fill="#0ee"/><path d="M8 8L2 12A7 7 0 0 0 9 15z" fill="#2a2"/><path d="M8 8L9 15A7 7 0 0 0 15 9z" fill="#ee2"/><path d="M8 8L15 9A7 7 0 0 0 12 2z" fill="#f22"/><path d="M8 8L12 2A7 7 0 0 0 8 1z" fill="#600"/></svg>
<div class="tr n" style="left:122px;top:204px">Atributos</div>
<div class="a dh" style="left:91px;top:228px;width:10px"></div>
<svg class="ti" style="left:101px;top:220px" width="16" height="16" viewBox="0 0 16 16"><path d="M1 2h7v7H1z" fill="#808000"/><path d="M1 9h8v6H1z" fill="#ffff00"/><path d="M8.5 1v14" stroke="#000"/><path d="M9 2.5h6M10 5.5h5M10 8.5h5M11.5 2v7" stroke="#000" shape-rendering="crispEdges"/><path d="M8 15l3-3H8z" fill="#a00000"/></svg>
<div class="tr n" style="left:122px;top:220px">Configuradores</div>
<div class="a dh" style="left:91px;top:244px;width:10px"></div>
<svg class="ti" style="left:101px;top:236px" width="16" height="16" viewBox="0 0 16 16"><path d="M1 1h14v14H1z" fill="#000"/><path d="M2 2h12v12H2z" fill="#fff"/><path d="M3.5 3.5h9v9h-9zM3.5 5.5h9M3.5 7.5h9M3.5 9.5h9M6.5 3.5v6M9.5 3.5v6" stroke="#000" fill="none" shape-rendering="crispEdges"/></svg>
<div class="tr n" style="left:122px;top:236px">Lista de materiales</div>
<div class="a dh" style="left:91px;top:260px;width:10px"></div>
<svg class="ti" style="left:101px;top:252px" width="16" height="16" viewBox="0 0 16 16"><path d="M0.5 7.5l6-6h3l6 6v4h-15z" fill="#ffff00" stroke="#000" stroke-width=".8"/><path d="M0.5 11.5h15v3h-15z" fill="#900000"/><path d="M0.5 11.5h15M0.5 14.5h15" stroke="#000"/><circle cx="5.5" cy="6" r="1" fill="#000"/><circle cx="10.5" cy="6" r="1" fill="#000"/><circle cx="5.5" cy="9.5" r="1" fill="#000"/><circle cx="10.5" cy="9.5" r="1" fill="#000"/></svg>
<div class="tr n" style="left:122px;top:252px">Multi-taladros</div>
<div class="a dh" style="left:91px;top:276px;width:10px"></div>
<svg class="ti" style="left:101px;top:268px" width="16" height="16" viewBox="0 0 16 16"><path d="M3.5 5.5l4-4h7l-4 4z" fill="#808000" stroke="#000" stroke-width=".8"/><path d="M7.5 5.5l7-4v10l-7 4z" fill="#900000" stroke="#000" stroke-width=".8"/><path d="M3.5 5.5h4v10h-4z" fill="#ffff00" stroke="#000"/><circle cx="11.5" cy="8.5" r="2.2" fill="#222" stroke="#aaa" stroke-width="1"/><path d="M0 9.5h3M1.5 8l1.5 1.5-1.5 1.5" stroke="#000" fill="none" stroke-width=".9"/></svg>
<div class="tr n" style="left:122px;top:268px">Ensamblajes</div>
<div class="a dh" style="left:91px;top:292px;width:10px"></div>
<svg class="ti" style="left:101px;top:284px" width="16" height="16" viewBox="0 0 16 16"><path d="M0.5 9.5l5-4h10l-5 4z" fill="#808000" stroke="#000" stroke-width=".8"/><path d="M10.5 9.5l5-4v6l-5 4z" fill="#900000" stroke="#000" stroke-width=".8"/><path d="M0.5 9.5h10v5h-10z" fill="#ffff00" stroke="#000"/><path d="M2.5 4.5h2v4h-2zM6.5 2.5h2v5h-2z" fill="#ffff00" stroke="#000" stroke-width=".8"/><path d="M4.5 5v3M8.5 3v4" stroke="#c00"/></svg>
<div class="tr n" style="left:122px;top:284px">Propagación</div>
<div class="a dh" style="left:91px;top:308px;width:10px"></div>
<svg class="ti" style="left:101px;top:300px" width="16" height="16" viewBox="0 0 16 16"><path d="M0.5 10.5l5-4h10l-5 4z" fill="#808000" stroke="#000" stroke-width=".8"/><path d="M10.5 10.5l5-4v5l-5 4z" fill="#900000" stroke="#000" stroke-width=".8"/><path d="M0.5 10.5h10v4h-10z" fill="#ffff00" stroke="#000"/><path d="M2.5 5.5h2v4h-2zM6.5 4.5h2v5h-2z" fill="#ffff00" stroke="#000" stroke-width=".8"/><rect x="9.5" y="0.5" width="6" height="5" fill="#fff" stroke="#000"/><path d="M11 2.5h3M11 4h3" stroke="#000"/></svg>
<div class="tr n" style="left:122px;top:300px">Configuración de propagaciones</div>
<div class="a dh" style="left:91px;top:324px;width:10px"></div>
<svg class="ti" style="left:101px;top:316px" width="16" height="16" viewBox="0 0 16 16"><path d="M3.5 5.5l4-4h7l-4 4z" fill="#808000" stroke="#000" stroke-width=".8"/><path d="M7.5 5.5l7-4v10l-7 4z" fill="#900000" stroke="#000" stroke-width=".8"/><path d="M3.5 5.5h4v10h-4z" fill="#ffff00" stroke="#000"/><path d="M0.5 6.5h3v6h-3z" fill="#ffff00" stroke="#000" stroke-width=".8"/><path d="M0.5 6.5l2-2h3" fill="none" stroke="#000" stroke-width=".6"/><circle cx="11.5" cy="8.5" r="2.2" fill="#222" stroke="#aaa" stroke-width="1"/></svg>
<div class="tr n" style="left:122px;top:316px">Ensamblaje automático</div>
<div class="a dh" style="left:91px;top:340px;width:10px"></div>
<svg class="ti" style="left:101px;top:332px" width="16" height="16" viewBox="0 0 16 16"><path d="M0.5 8.5l4-3h11l-4 3z" fill="#808000" stroke="#000" stroke-width=".8"/><path d="M0.5 8.5h11v6h-11z" fill="#808000" stroke="#000"/><path d="M11.5 8.5l4-3v6l-4 3z" fill="#606000" stroke="#000" stroke-width=".8"/><path d="M3 10l6-6v7z" fill="#900000"/><path d="M3 10l6-6" stroke="#ffff00" stroke-width="1.5"/><path d="M2.5 1v9M9.5 1v9M2.5 1.5h7" stroke="#0000ff" fill="none"/><path d="M4 2l1 1M7 2l1 1" stroke="#00f"/></svg>
<div class="tr n" style="left:122px;top:332px">Inicio</div>
<div class="a dh" style="left:91px;top:356px;width:10px"></div>
<svg class="ti" style="left:101px;top:348px" width="16" height="16" viewBox="0 0 16 16"><path d="M0.5 5.5l5-4h10l-5 4z" fill="#808000" stroke="#000" stroke-width=".8"/><path d="M0.5 5.5h10v9h-10z" fill="#808000" stroke="#000"/><path d="M10.5 5.5l5-4v9l-5 4z" fill="#ffff00" stroke="#000" stroke-width=".8"/><path d="M0.5 9.5h10" stroke="#000"/><path d="M11 12l2-3" stroke="#000" stroke-width=".6"/></svg>
<div class="tr n" style="left:122px;top:348px">Canto / Laminado</div>
<div class="a dh" style="left:91px;top:372px;width:10px"></div>
<svg class="ti" style="left:101px;top:364px" width="16" height="16" viewBox="0 0 16 16"><path d="M0.5 9.5l4-3h9l-4 3z" fill="#808000" stroke="#000" stroke-width=".8"/><path d="M0.5 9.5h9v5h-9z" fill="#ffff00" stroke="#000"/><path d="M9.5 9.5l4-3v5l-4 3z" fill="#900000" stroke="#000" stroke-width=".8"/><path d="M9.5 0.5h4l2 2v5h-6z" fill="#dce8fa" stroke="#8898c8" stroke-width=".8"/></svg>
<div class="tr n" style="left:122px;top:364px">Definir piezas</div>
<div class="a dh" style="left:91px;top:388px;width:10px"></div>
<svg class="ti" style="left:101px;top:380px" width="16" height="16" viewBox="0 0 16 16"><path d="M0.5 5.5l3-3h12v12h-15z" fill="#808000"/><path d="M0.5 5.5h15" stroke="#ffff00" stroke-width="2"/><path d="M3.5 2.5h12" stroke="#ffff00" stroke-width="1"/><path d="M1 5v10M15 3v12M1 5l3-3" stroke="#b00000" stroke-width="1.6"/></svg>
<div class="tr n" style="left:122px;top:380px">Sobremedidas material</div>
<div class="a dh" style="left:91px;top:404px;width:10px"></div>
<svg class="ti" style="left:101px;top:396px" width="16" height="16" viewBox="0 0 16 16"><rect x="3.5" y="3.5" width="10" height="7" fill="#ff0" stroke="#000"/><path d="M0 7h3" stroke="#f33"/><rect x="4" y="12" width="2" height="2" fill="#f33"/><rect x="11" y="12" width="2" height="2" fill="#f33"/></svg>
<div class="tr n" style="left:122px;top:396px">Configuración estaciones de trabajo</div>
<div class="a dh" style="left:91px;top:420px;width:10px"></div>
<svg class="ti" style="left:101px;top:412px" width="16" height="16" viewBox="0 0 16 16"><path d="M4 3h8v9H4zM7 1v2M12 5h3M12 8h3M2 12h6M8 12v3h4" stroke="#000" fill="#fff"/><path d="M6 6h2M9 6v2M5 14h2" stroke="#777"/></svg>
<div class="tr n" style="left:122px;top:412px">TopSolid'Draft</div>
<div class="a dh" style="left:91px;top:436px;width:10px"></div>
<svg class="ti" style="left:101px;top:428px" width="16" height="16" viewBox="0 0 16 16"><path d="M2 1h5l2 2v8H2z" fill="#fff" stroke="#000"/><path d="M6 5h6l2 2v8H6z" fill="#fff" stroke="#000"/><path d="M8 9.5h4M8 11.5h4M8 13.5h4" stroke="#333"/></svg>
<div class="tr n" style="left:122px;top:428px">Ficheros</div>
<div class="a dh" style="left:91px;top:452px;width:10px"></div>
<svg class="ti" style="left:101px;top:444px" width="16" height="16" viewBox="0 0 16 16"><path d="M0 0h16v16H0z" fill="#fff"/><path d="M2 0h9l-4 11z" fill="#999"/><path d="M12 0h4v16H4z" fill="#3d6d80"/><path d="M1 12l2 3h-2z" fill="#3d6d80"/></svg>
<div class="tr n" style="left:122px;top:444px">Triviso</div>
<div class="a ex" style="left:86px;top:464px"><i></i><b></b></div>
<div class="a dh" style="left:96px;top:468px;width:5px"></div>
<svg class="ti" style="left:101px;top:460px" width="16" height="16" viewBox="0 0 16 16"><path d="M5 1h5v11H5z" fill="#d83010" stroke="#501000" stroke-width=".8"/><path d="M6 2h2v9H6z" fill="#ff7040"/><path d="M0 8.5h3v3h9v-3h4v7H0z" fill="#ffff00"/><path d="M0 8.5h3v3h9v-3h4" stroke="#000" fill="none"/><path d="M2 4l-1-2M13 4l1-2" stroke="#ee0"/></svg>
<div class="tr n" style="left:122px;top:460px">Mecanizado</div>
<div class="a ex" style="left:86px;top:480px"><i></i><b></b></div>
<div class="a dh" style="left:96px;top:484px;width:5px"></div>
<svg class="ti" style="left:101px;top:476px" width="16" height="16" viewBox="0 0 16 16"><path d="M1.5 5.5h6v10h-6z" fill="#ffff00" stroke="#000"/><path d="M8 2l2 1 2-1 1 2 2 1-1 2 1 2-2 1-1 2-2-1-2 1" fill="#c8c8c8" stroke="#333" stroke-width=".8"/><path d="M9 5l3 2-3 2" stroke="#fff" fill="none"/></svg>
<div class="tr n" style="left:122px;top:476px">Seccionado</div>
<div class="a ex" style="left:67px;top:496px"><i></i><b></b></div>
<div class="a dh" style="left:77px;top:500px;width:5px"></div>
<svg class="ti" style="left:82px;top:492px" width="16" height="16" viewBox="0 0 16 16"><path d="M1.5 0.5h13v11h-13z" fill="#d0d0d0" stroke="#333"/><path d="M3 2h9v7H3z" fill="#0000d8"/><path d="M4 3h1v2H4z" fill="#8cf"/><path d="M14.5 1v11" stroke="#555"/><path d="M3 12.5h9l1 2H2z" fill="#bbb" stroke="#444" stroke-width=".6"/></svg>
<div class="tr b" style="left:104px;top:492px">Pantalla</div>
<div class="a ex" style="left:67px;top:512px"><i></i><b></b></div>
<div class="a dh" style="left:77px;top:516px;width:5px"></div>
<svg class="ti" style="left:82px;top:508px" width="16" height="16" viewBox="0 0 16 16"><path d="M3.5 3.5h11v11h-11z" fill="#ffff00" stroke="#000"/><path d="M15 4v11H4" stroke="#555" fill="none"/><path d="M6.5 8.5h4v4h-4zM8.5 6.5h4v4" stroke="#000" fill="none"/><path d="M0 2l2 2M4 0L2 2M1 0l1 2 1 1M0 3h2" stroke="#a0e0ff"/><circle cx="2" cy="2" r="1.2" fill="#00d0ff"/></svg>
<div class="tr b" style="left:104px;top:508px">Documento</div>
<div class="a dh" style="left:72px;top:532px;width:10px"></div>
<svg class="ti" style="left:82px;top:524px" width="16" height="16" viewBox="0 0 16 16"><path d="M5 0v3M5 7v3M0 5h3M7 5h3M1.5 1.5l2 2M6.5 6.5l2 2M8.5 1.5l-2 2M1.5 8.5l2-2" stroke="#000" stroke-width=".9"/><path d="M6.5 6.5v9l2-2 2 3 1.5-1-2-3h3z" fill="#fff" stroke="#000" stroke-width=".9"/></svg>
<div class="tr b" style="left:104px;top:524px">Escoger</div>
<div class="a ex" style="left:67px;top:544px"><i></i><b></b></div>
<div class="a dh" style="left:77px;top:548px;width:5px"></div>
<svg class="ti" style="left:82px;top:540px" width="16" height="16" viewBox="0 0 16 16"><circle cx="8" cy="8" r="7" fill="#c00"/><path d="M8 8L8 1A7 7 0 0 0 2 4z" fill="#00c"/><path d="M8 8L2 4A7 7 0 0 0 2 12z" fill="#0ee"/><path d="M8 8L2 12A7 7 0 0 0 9 15z" fill="#2a2"/><path d="M8 8L9 15A7 7 0 0 0 15 9z" fill="#ee2"/><path d="M8 8L15 9A7 7 0 0 0 12 2z" fill="#f22"/><path d="M8 8L12 2A7 7 0 0 0 8 1z" fill="#600"/></svg>
<div class="tr b" style="left:104px;top:540px">Colores</div>
<div class="a dh" style="left:72px;top:564px;width:10px"></div>
<svg class="ti" style="left:82px;top:556px" width="16" height="16" viewBox="0 0 16 16"><path d="M1 5.5h10v9H1z" fill="#fff" stroke="#000" stroke-width="1.6"/><path d="M1 5.5l3-3h10l-3 3z" fill="#20c020" stroke="#000" stroke-width="1.3"/><path d="M11 5.5l3-3v9l-3 3z" fill="#999" stroke="#000" stroke-width="1.3"/><path d="M2 6.5h8" stroke="#e02020" stroke-width="1.2"/></svg>
<div class="tr b" style="left:104px;top:556px">Opciones de visualización</div>
<div class="a dh" style="left:72px;top:580px;width:10px"></div>
<svg class="ti" style="left:82px;top:572px" width="16" height="16" viewBox="0 0 16 16"><path d="M9.5 2.5l2-2h3l1 2-2 3h-5z" fill="#ddd" stroke="#000"/><path d="M1.5 6.5l2-2h4l1 2-2 3h-5z" fill="#ddd" stroke="#000"/><path d="M0.5 14.5l2-3h9l1 2-2 2h-10z" fill="#ccc" stroke="#000"/><path d="M3 13.5h6" stroke="#fff"/></svg>
<div class="tr b" style="left:104px;top:572px">Teclas rápidas</div>
<div class="a dh" style="left:72px;top:596px;width:10px"></div>
<svg class="ti" style="left:82px;top:588px" width="16" height="16" viewBox="0 0 16 16"><path d="M0.5 2.5h7v10h-7zM8.5 2.5h7v10h-7z" fill="#8a8a8a" stroke="#333"/><path d="M4 4v6M2 8l2 2.5 2-2.5M12 11V5M10 7l2-2.5 2 2.5" stroke="#00e8ff" stroke-width="2" fill="none"/></svg>
<div class="tr b" style="left:104px;top:588px">Capas rápidas / líneas rápidas</div>
<div class="a dh" style="left:72px;top:612px;width:10px"></div>
<svg class="ti" style="left:82px;top:604px" width="16" height="16" viewBox="0 0 16 16"><path d="M1 5.5h10v9H1z" fill="#fff" stroke="#000" stroke-width="1.6"/><path d="M1 5.5l3-3h10l-3 3" fill="#fff" stroke="#000" stroke-width="1.3"/><path d="M11 5.5l3-3v9l-3 3z" fill="#999" stroke="#000" stroke-width="1.3"/></svg>
<div class="tr b" style="left:104px;top:604px">Opciones de renderizado</div>
<div class="a dh" style="left:72px;top:628px;width:10px"></div>
<svg class="ti" style="left:82px;top:620px" width="16" height="16" viewBox="0 0 16 16"><path d="M4 14q0-3 4-3t4 3v2H4z" fill="#1a3a9a"/><circle cx="8" cy="7" r="3.5" fill="#f4c8a0" stroke="#000" stroke-width=".6"/><path d="M4 6q0-5 5-5t3 4l-2-1-5 2z" fill="#111"/></svg>
<div class="tr b" style="left:104px;top:620px">Información del usuario</div>
<div class="a ex" style="left:67px;top:640px"><i></i><b></b></div>
<div class="a dh" style="left:77px;top:644px;width:5px"></div>
<svg class="ti" style="left:82px;top:636px" width="16" height="16" viewBox="0 0 16 16"><path d="M2 1v12h13" stroke="#09d" stroke-width="1.4" fill="none"/><path d="M2 13l8-8" stroke="#09d"/><circle cx="8" cy="8" r="1.6" fill="#00c"/><path d="M0 3l2-3 2 3M13 11l3 2-3 2" fill="#09d"/></svg>
<div class="tr b" style="left:104px;top:636px">Frame/point</div>
<div class="a dh" style="left:72px;top:660px;width:10px"></div>
<svg class="ti" style="left:82px;top:652px" width="16" height="16" viewBox="0 0 16 16"><ellipse cx="8" cy="8" rx="6.8" ry="3.5" fill="#888" stroke="#000"/><ellipse cx="8" cy="5.5" rx="6.8" ry="3.5" fill="#ddd" stroke="#000"/><path d="M6 5h4l-2 2z" fill="#000"/><path d="M1 14q2-1 4 0t5 0 5-1" stroke="#e00" stroke-width="1.6" fill="none"/></svg>
<div class="tr b" style="left:104px;top:652px">Parámetro</div>
<div class="a dh" style="left:72px;top:676px;width:10px"></div>
<svg class="ti" style="left:82px;top:668px" width="16" height="16" viewBox="0 0 16 16"><circle cx="8" cy="7.5" r="4.3" fill="#fff" stroke="#000" stroke-width="1.2"/><path d="M8 0v16M0 7.5h16" stroke="#f00" stroke-width="2" stroke-dasharray="3 1.5"/></svg>
<div class="tr b" style="left:104px;top:668px">Axes/hatch lines</div>
<div class="a dh" style="left:72px;top:692px;width:10px"></div>
<svg class="ti" style="left:82px;top:684px" width="16" height="16" viewBox="0 0 16 16"><path d="M1 15V6l5-5h6" stroke="#2050e0" stroke-width="2" fill="none"/><path d="M5 14l8-12 2 1-8 12-2 0z" fill="#f0c020" stroke="#702020" stroke-width=".8"/><path d="M13 2l1-1 2 1-1 1z" fill="#c08080"/></svg>
<div class="tr b" style="left:104px;top:684px">Curve</div>
<div class="a dh" style="left:72px;top:708px;width:10px"></div>
<svg class="ti" style="left:82px;top:700px" width="16" height="16" viewBox="0 0 16 16"><path d="M2 8V2.5h8.5l4.5 4v9.5" stroke="#9098c8" stroke-width="3" fill="none"/><path d="M11 3l3.5 3.5V16" stroke="#fff" stroke-width="1" fill="none"/><path d="M5 4l3-1 7 11-1 2-3-1z" fill="#f8a010" stroke="#a05000" stroke-width=".6"/><path d="M7 5l6 9" stroke="#ffd050" stroke-width="1.2"/></svg>
<div class="tr b" style="left:104px;top:700px">Sketch</div>
<div class="a ex" style="left:67px;top:720px"><i></i><b></b></div>
<div class="a dh" style="left:77px;top:724px;width:5px"></div>
<svg class="ti" style="left:82px;top:716px" width="16" height="16" viewBox="0 0 16 16"><path d="M2 1v14M14 1v14M2 4h12" stroke="#080" stroke-width="1.2"/><path d="M3 3v2M13 3v2" stroke="#080"/></svg>
<div class="tr b" style="left:104px;top:716px">Acotación</div>
<div class="a ex" style="left:67px;top:736px"><i></i><b></b></div>
<div class="a dh" style="left:77px;top:740px;width:5px"></div>
<svg class="ti" style="left:82px;top:732px" width="16" height="16" viewBox="0 0 16 16"><path d="M2 14l5-8h6" stroke="#e00" stroke-width="1.2" fill="none"/><path d="M9 3h6" stroke="#000" stroke-width="1.2"/><circle cx="2" cy="14" r="1" fill="#e00"/></svg>
<div class="tr b" style="left:104px;top:732px">Restricción</div>
<div class="a ex" style="left:67px;top:752px"><i></i><b></b></div>
<div class="a dh" style="left:77px;top:756px;width:5px"></div>
<svg class="ti" style="left:82px;top:748px" width="16" height="16" viewBox="0 0 16 16"><path d="M1 1h14v4h-1.5l-1-2H9.5v10l2 .7V15h-7v-1.3l2-.7V3H3.5l-1 2H1z" fill="#000"/></svg>
<div class="tr b" style="left:104px;top:748px">Text/note</div>
<div class="a dh" style="left:72px;top:772px;width:10px"></div>
<svg class="ti" style="left:82px;top:764px" width="16" height="16" viewBox="0 0 16 16"><circle cx="11" cy="5" r="3.5" fill="#fff" stroke="#e00" stroke-width="1.2"/><path d="M8.5 7.5L2 14" stroke="#e00" stroke-width="1.2"/><path d="M1 15l1-4 3 3z" fill="#000"/></svg>
<div class="tr b" style="left:104px;top:764px">Índice predefinido</div>
<div class="a ex" style="left:67px;top:784px"><i></i><b></b></div>
<div class="a dh" style="left:77px;top:788px;width:5px"></div>
<svg class="ti" style="left:82px;top:780px" width="16" height="16" viewBox="0 0 16 16"><path d="M0 0h16v16H0z" fill="#fff"/><path d="M0 11h16v5H0z" fill="#ffff00"/><path d="M1.5 0v16M5.5 0v16M15.5 0v16M0 3.5h16M0 7.5h16M0 10.5h16M0 15.5h16" stroke="#000" stroke-width="1"/><path d="M3 2v1M3 5v1M3 9v1M3 13v1M8 5.5h5M8 9h5M8 13h5M9 2h3" stroke="#000" stroke-width="1"/></svg>
<div class="tr b" style="left:104px;top:780px">Tabla</div>
<div class="a ex" style="left:67px;top:800px"><i></i><b></b></div>
<div class="a dh" style="left:77px;top:804px;width:5px"></div>
<svg class="ti" style="left:82px;top:796px" width="16" height="16" viewBox="0 0 16 16"><rect x="5.5" y="1.5" width="6" height="5" fill="#fff" stroke="#f00"/><path d="M8.5 7v5" stroke="#f00"/><path d="M6 13.5l2.5-2 2.5 2z" fill="#f00"/><path d="M1 14.5h14" stroke="#000" stroke-width="1.2"/></svg>
<div class="tr b" style="left:104px;top:796px">Tolerancia de referencia</div>
<div class="a ex" style="left:67px;top:816px"><i></i><b></b></div>
<div class="a dh" style="left:77px;top:820px;width:5px"></div>
<svg class="ti" style="left:82px;top:812px" width="16" height="16" viewBox="0 0 16 16"><path d="M15 1.5H1.5v12H15M11.5 1.5v12" stroke="#f00" fill="#fff" stroke-width="1.2"/><path d="M6.5 4v8M3.5 11.5h6" stroke="#000" stroke-width="1.2"/></svg>
<div class="tr b" style="left:104px;top:812px">Tolerancia geométrica</div>
<div class="a ex" style="left:67px;top:832px"><i></i><b></b></div>
<div class="a dh" style="left:77px;top:836px;width:5px"></div>
<svg class="ti" style="left:82px;top:828px" width="16" height="16" viewBox="0 0 16 16"><path d="M1 1h14v4h-1.5l-1-2H9.5v10l2 .7V15h-7v-1.3l2-.7V3H3.5l-1 2H1z" fill="#000"/></svg>
<div class="tr b" style="left:104px;top:828px">Propiedades predefinidas</div>
<div class="a dh" style="left:72px;top:852px;width:10px"></div>
<svg class="ti" style="left:82px;top:844px" width="16" height="16" viewBox="0 0 16 16"><rect x="2" y="1" width="12" height="14" fill="#c8d8f4"/><path d="M2 2h2v2H2zM6 1h2v2H6zM10 2h2v2h-2zM12 6h2v2h-2zM3 8h2v2H3zM8 12h2v2H8zM12 11h2v3h-2z" fill="#8a90d0"/><path d="M6 5h4v5H6z" fill="#fff"/></svg>
<div class="tr b" style="left:104px;top:844px">Definir piezas múltiples</div>
<div class="a dh" style="left:72px;top:868px;width:10px"></div>
<svg class="ti" style="left:82px;top:860px" width="16" height="16" viewBox="0 0 16 16"><path d="M5 1h6l3 3v12H5z" fill="#c6daf7" stroke="#6a7fd0" stroke-width=".8"/><path d="M1 4h9l-3 5v7H5V9z" fill="#666" stroke="#444" stroke-width=".5"/></svg>
<div class="tr b" style="left:104px;top:860px">Filtrar con multi-criterios</div>

<!-- TAB CONTROL -->
<div class="a" style="left:348px;top:191px;width:863px;height:686px;background:#fff;border-left:1px solid #d9d9d9;border-top:1px solid #d9d9d9;border-bottom:1px solid #d9d9d9"></div>
<div class="a" style="left:348px;top:171px;width:75px;height:21px;background:#fff;border:1px solid #d9d9d9;border-bottom:none"></div>
<div class="a" style="left:422px;top:173px;width:63px;height:19px;background:#f0f0f0;border:1px solid #d9d9d9;border-bottom:none"></div>
<div class="a" style="left:484px;top:173px;width:77px;height:19px;background:#f0f0f0;border:1px solid #d9d9d9;border-bottom:none"></div>
<div class="a" style="left:560px;top:173px;width:112px;height:19px;background:#f0f0f0;border:1px solid #d9d9d9;border-bottom:none"></div>
<span class="tab" style="left:356px;top:173px">Designación</span>
<span class="tab" style="left:427px;top:176px">Referencia</span>
<span class="tab" style="left:491px;top:176px">Tipo de pieza</span>
<span class="tab" style="left:566px;top:176px">Categoría de la pieza</span>

<!-- LIST BOX -->
<div class="a" style="left:737px;top:263px;width:200px;height:260px;background:#fff;border:1px solid #7a7a7a"></div>
<span class="a" style="left:744px;top:269px;font-size:10.8px;line-height:14px">Designación</span>

<!-- ARROW BUTTONS -->
<div class="a" style="left:774px;top:591px;width:40px;height:40px;background:#efefef;border-right:1px solid #000;border-bottom:1px solid #000"></div>
<div class="a" style="left:861px;top:591px;width:40px;height:40px;background:#efefef;border-right:1px solid #000;border-bottom:1px solid #000"></div>
<svg style="left:774px;top:591px" width="40" height="40" viewBox="0 0 40 40"><path d="M19 4L30 15H25V34H13V15H8z" fill="#3366ff" stroke="#0a2aa0" stroke-width="1"/><path d="M13 15V34" stroke="#6a90ff"/></svg>
<svg style="left:861px;top:591px" width="40" height="40" viewBox="0 0 40 40"><path d="M14 5H26V24H31L20 35L9 24H14z" fill="#3366ff" stroke="#0a2aa0" stroke-width="1"/></svg>

<!-- CHECKBOX -->
<div class="a" style="left:729px;top:701px;width:13px;height:13px;background:#fff;border:1px solid #333"></div>
<span class="a" style="left:745px;top:701px;font-size:10.6px;line-height:14px">Orden alfabético</span>

<!-- BUTTONS -->
<div class="btn" style="left:755px;top:786px;width:68px;height:19px;line-height:17px">Añadir</div>
<div class="btn" style="left:852px;top:786px;width:68px;height:19px;line-height:15px;border:2px solid #0078d7">Borrar</div>

<!-- BOTTOM -->
<div class="btn" style="left:612px;top:884px;width:78px;height:19px;line-height:17px">OK</div>
<div class="btn" style="left:694px;top:884px;width:78px;height:19px;line-height:17px">Cancelar</div>

</body></html>
